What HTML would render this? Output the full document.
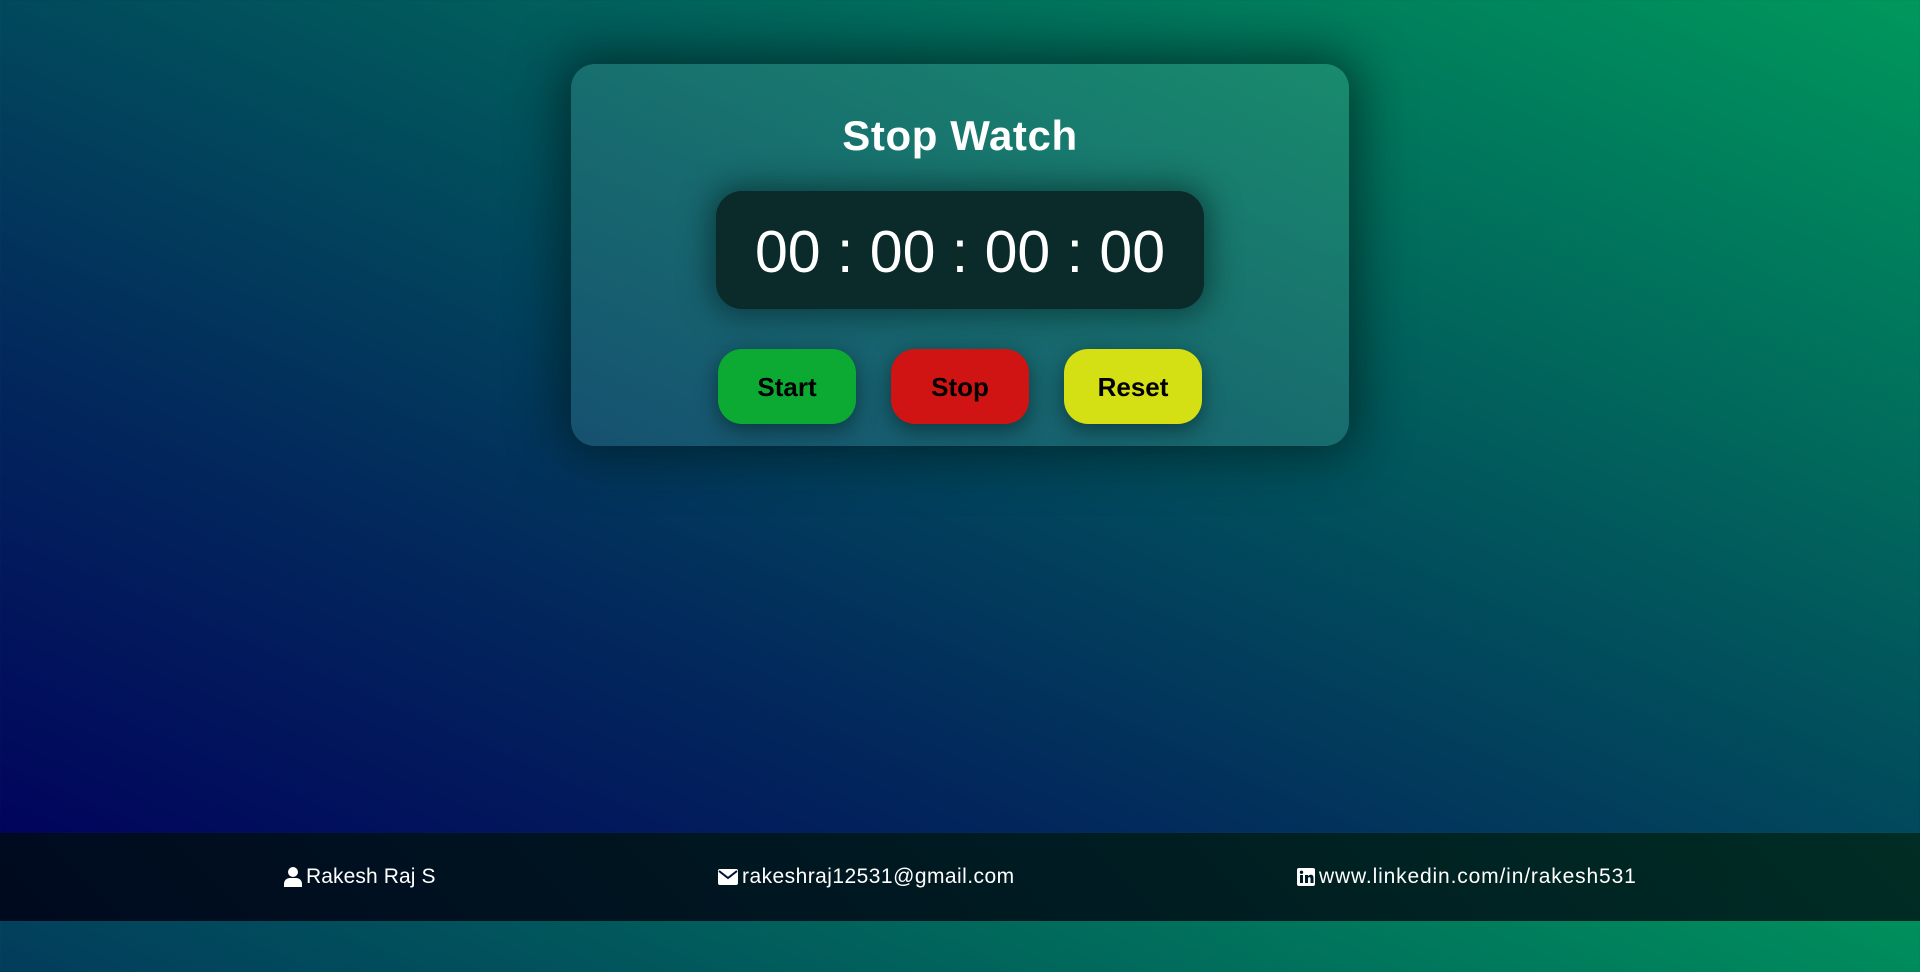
<!DOCTYPE html>
<html><head><meta charset="utf-8"><style>
*{margin:0;padding:0;box-sizing:border-box}
body{width:1920px;height:972px;overflow:hidden;position:relative;font-family:"Liberation Sans",sans-serif;
background:linear-gradient(to top right,#01045c 0%,#022a5c 30%,#01585c 60%,#00985c 100%);background-size:1920px 833px;background-repeat:repeat-y;}
.card{position:absolute;left:571px;top:64px;width:778px;height:382px;border-radius:24px;
background:linear-gradient(to top right,rgba(60,130,150,0.35),rgba(70,170,140,0.35));
box-shadow:0 0 50px 10px rgba(0,20,20,0.6);}
h1{position:absolute;left:0;right:0;top:112px;text-align:center;color:#fff;font-size:42px;font-weight:bold;letter-spacing:0.6px}
.timer{position:absolute;left:716px;top:191px;width:488px;height:118px;border-radius:26px;background:#0b2a2a;
box-shadow:0 0 30px 6px rgba(0,20,20,0.5);color:#fff;font-size:59px;text-align:center;line-height:122px;}
.btn{position:absolute;top:349px;width:138px;height:75px;border-radius:24px;font-weight:bold;font-size:26px;
text-align:center;line-height:77px;color:#000;box-shadow:0 6px 20px rgba(0,20,20,0.5)}
.foot{position:absolute;left:0;top:833px;width:1920px;height:88px;background:linear-gradient(to right,rgba(0,0,20,0.85),rgba(0,15,20,0.78));}
.fi{position:absolute;top:865px;color:#fff;font-size:21px;line-height:24px;display:flex;align-items:center;gap:4px;letter-spacing:0.1px}
</style></head><body>
<div class="card"></div>
<h1>Stop Watch</h1>
<div class="timer">00 : 00 : 00 : 00</div>
<div class="btn" style="left:718px;background:#0daa33">Start</div>
<div class="btn" style="left:891px;background:#d01414">Stop</div>
<div class="btn" style="left:1064px;background:#d4e014">Reset</div>
<div class="foot"></div>
<div class="fi" style="left:284px"><svg width="18" height="20" viewBox="0 0 18 20"><circle cx="9" cy="5" r="5" fill="#fff"/><path d="M0 20v-3c0-4 3-6 6-6h6c3 0 6 2 6 6v3z" fill="#fff"/></svg>Rakesh Raj S</div>
<div class="fi" style="left:718px;letter-spacing:0.45px"><svg width="20" height="16" viewBox="0 0 20 16"><rect x="0" y="0" width="20" height="16" rx="2" fill="#fff"/><path d="M1 2l9 7 9-7" stroke="#001030" stroke-width="2" fill="none"/></svg>rakeshraj12531@gmail.com</div>
<div class="fi" style="left:1297px;letter-spacing:0.85px"><svg width="18" height="18" viewBox="0 0 18 18"><rect width="18" height="18" rx="2" fill="#fff"/><rect x="3" y="7" width="3" height="8" fill="#001a25"/><circle cx="4.5" cy="4.3" r="1.7" fill="#001a25"/><path d="M8 7h3v1.3c.6-1 1.6-1.5 2.8-1.5 2 0 2.7 1.3 2.7 3.5V15h-3v-4.2c0-1-.3-1.7-1.2-1.7S11 9.8 11 10.8V15H8z" fill="#001a25"/></svg>www.linkedin.com/in/rakesh531</div>
</body></html>
